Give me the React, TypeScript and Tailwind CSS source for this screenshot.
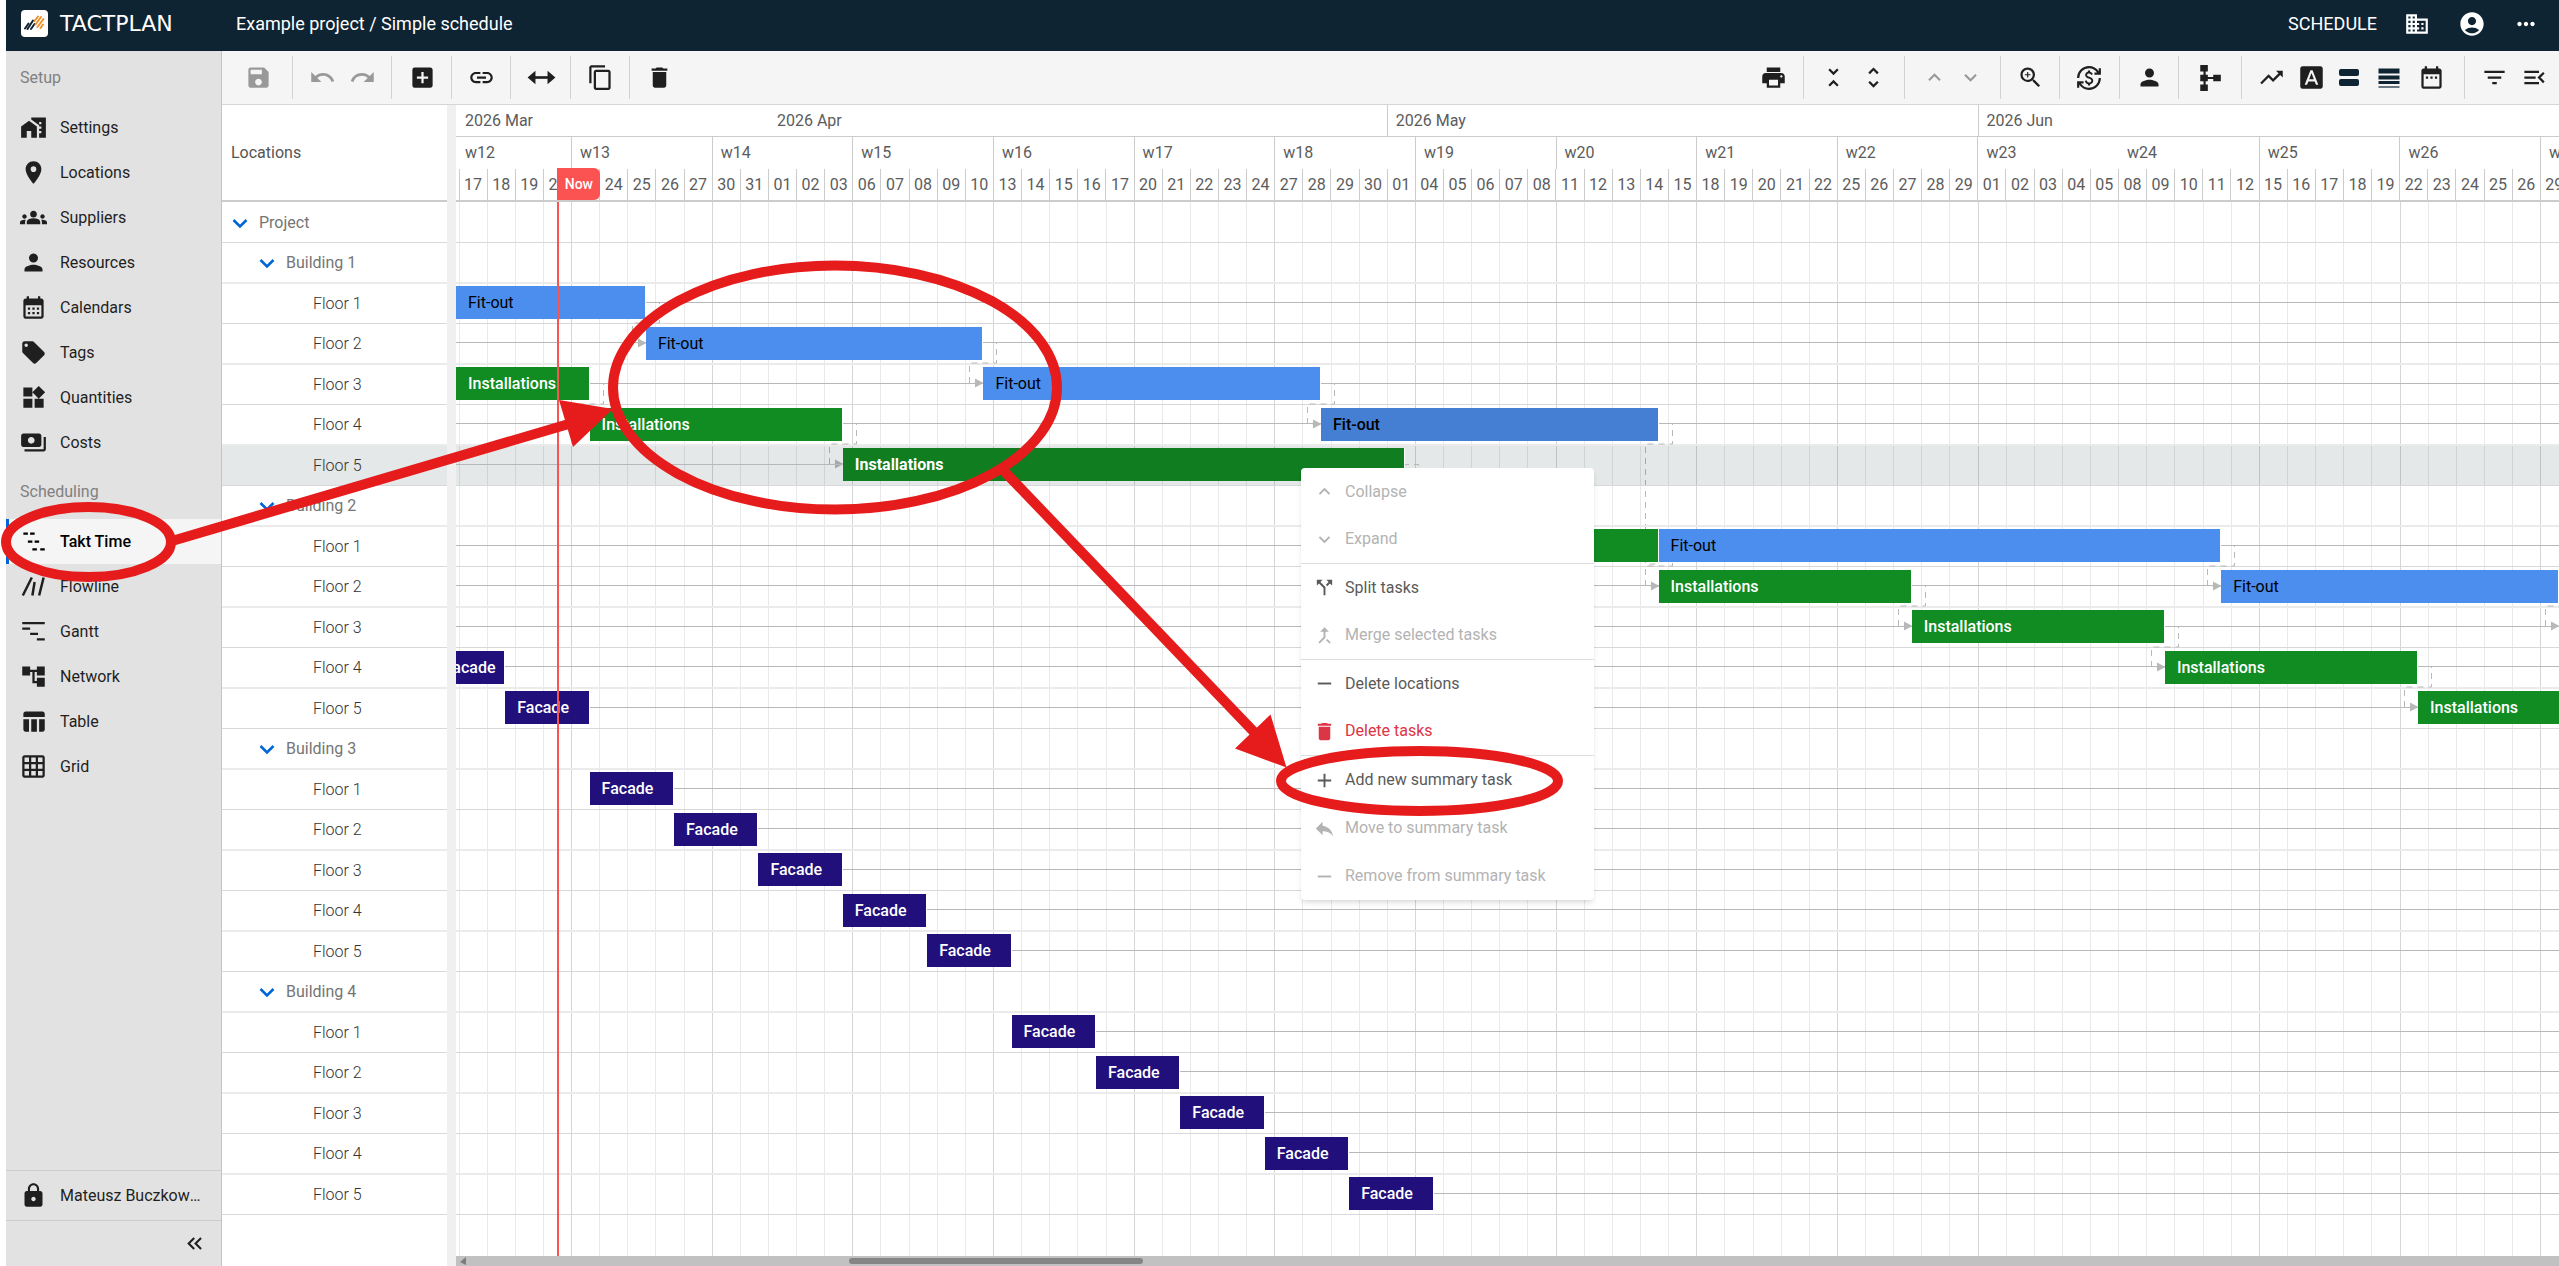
import type { ReactNode } from "react";
import {
  MdAccountCircle, MdAccountTree, MdAdd, MdAddBox, MdCalendarMonth, MdCallMerge, MdCallSplit,
  MdContentCopy, MdCurrencyExchange, MdDelete, MdDomain, MdFilterList, MdFontDownload,
  MdGridOn, MdGroups, MdHomeWork, MdKeyboardArrowDown, MdKeyboardArrowUp, MdKeyboardDoubleArrowLeft, MdLink,
  MdLocalOffer, MdLocationOn, MdLock, MdMenuOpen, MdMoreHoriz, MdPayments, MdPerson, MdPrint, MdRedo,
  MdRemove, MdReply, MdSave, MdTableChart, MdTrendingUp, MdUndo, MdUnfoldLess, MdUnfoldMore,
  MdWidgets, MdZoomIn, MdDateRange,
} from "react-icons/md";

/* ---------- time scale (in working days, day 0 = 17 March 2026) ---------- */

const VIEW_START = -0.09;
const VIEW_DAYS = 74.76;
const VIEW_END = VIEW_START + VIEW_DAYS;
const pct = (days: number) => `${(days / VIEW_DAYS) * 100}%`;
const at = (day: number) => pct(day - VIEW_START);
const NOW = 3.49;

const dayLabels: string[] = [];
for (let t = Date.UTC(2026, 2, 17); dayLabels.length < 75; t += 86400000) {
  const d = new Date(t);
  if (d.getUTCDay() % 6 !== 0) dayLabels.push(String(d.getUTCDate()).padStart(2, "0"));
}

type Segment = { label: string; from: number; line: boolean };
const months: Segment[] = [
  { label: "2026 Mar", from: VIEW_START, line: false },
  { label: "2026 Apr", from: 11, line: false },
  { label: "2026 May", from: 33, line: true },
  { label: "2026 Jun", from: 54, line: true },
];
const weeks: Segment[] = [{ label: "w12", from: VIEW_START, line: false }];
for (let w = 13; w <= 27; w++) weeks.push({ label: `w${w}`, from: 4 + (w - 13) * 5, line: w !== 24 });

/* ---------- schedule data ---------- */

type Kind = "fit" | "fitActive" | "inst" | "instActive" | "facade";
type Task = { kind: Kind; from: number; to: number; link?: boolean };
type Row = { name: string; level: number; active?: boolean; line?: [number, number]; tasks?: Task[] };

const kinds: Record<Kind, { label: string; look: string }> = {
  fit: { label: "Fit-out", look: "bg-[#4b8eed] text-black" },
  fitActive: { label: "Fit-out", look: "bg-[#447fd3] text-black font-medium" },
  inst: { label: "Installations", look: "bg-[#108c23] text-white font-medium" },
  instActive: { label: "Installations", look: "bg-[#0f7d20] text-white font-bold" },
  facade: { label: "Facade", look: "bg-[#210f7c] text-white font-medium" },
};

const facade = (n: number, from: number): Row => ({
  name: `Floor ${n}`, level: 2, line: [from, VIEW_END], tasks: [{ kind: "facade", from, to: from + 3 }],
});

const rows: Row[] = [
  { name: "Project", level: 0 },
  { name: "Building 1", level: 1 },
  { name: "Floor 1", level: 2, line: [VIEW_START, VIEW_END], tasks: [{ kind: "fit", from: VIEW_START, to: 6.66, link: true }] },
  { name: "Floor 2", level: 2, line: [VIEW_START, VIEW_END], tasks: [{ kind: "fit", from: 6.66, to: 18.66, link: true }] },
  { name: "Floor 3", level: 2, line: [VIEW_START, VIEW_END], tasks: [
    { kind: "inst", from: VIEW_START, to: 4.66, link: true },
    { kind: "fit", from: 18.66, to: 30.66, link: true },
  ] },
  { name: "Floor 4", level: 2, line: [VIEW_START, VIEW_END], tasks: [
    { kind: "inst", from: 4.66, to: 13.66, link: true },
    { kind: "fitActive", from: 30.66, to: 42.66 },
  ] },
  { name: "Floor 5", level: 2, active: true, line: [VIEW_START, 14], tasks: [{ kind: "instActive", from: 13.66, to: 33.66, link: true }] },
  { name: "Building 2", level: 1 },
  { name: "Floor 1", level: 2, line: [VIEW_START, VIEW_END], tasks: [
    { kind: "inst", from: 33.66, to: 42.66, link: true },
    { kind: "fit", from: 42.66, to: 62.66, link: true },
  ] },
  { name: "Floor 2", level: 2, line: [VIEW_START, VIEW_END], tasks: [
    { kind: "inst", from: 42.66, to: 51.66, link: true },
    { kind: "fit", from: 62.66, to: 74.66, link: true },
  ] },
  { name: "Floor 3", level: 2, line: [VIEW_START, VIEW_END], tasks: [{ kind: "inst", from: 51.66, to: 60.66, link: true }] },
  { name: "Floor 4", level: 2, line: [-0.1, VIEW_END], tasks: [
    { kind: "facade", from: -0.95, to: 1.66 },
    { kind: "inst", from: 60.66, to: 69.66, link: true },
  ] },
  { name: "Floor 5", level: 2, line: [1.66, VIEW_END], tasks: [
    { kind: "facade", from: 1.66, to: 4.66 },
    { kind: "inst", from: 69.66, to: 78.66 },
  ] },
  { name: "Building 3", level: 1 },
  facade(1, 4.66), facade(2, 7.66), facade(3, 10.66), facade(4, 13.66), facade(5, 16.66),
  { name: "Building 4", level: 1 },
  facade(1, 19.66), facade(2, 22.66), facade(3, 25.66), facade(4, 28.66), facade(5, 31.66),
];

const rowBox = (i: number) =>
  i % 2 === 0 ? "h-10 border-b border-[#d8d8d8]" : "h-[41px] border-b-2 border-[#ebebeb]";

/* ---------- custom icons ---------- */

const Svg = ({ children, size = 27 }: { children: ReactNode; size?: number }) => (
  <svg width={size} height={size} viewBox="0 0 24 24" fill="none" stroke="currentColor" strokeWidth="2" aria-hidden>
    {children}
  </svg>
);
const TaktIcon = () => <Svg><path d="M3 5h4M9 5h4M7 12h4M13 12h4M11 19h4M18 19h4" /></Svg>;
const FlowIcon = () => <Svg><path d="M2.500 20L10.500 4M11 20l2-12M17 20l4-16" strokeWidth="2.200" /></Svg>;
const GanttIcon = () => <Svg><path d="M2 4.500h20M2 9.500h7M9 14h7M15 19h7" /></Svg>;
const ChevronIcon = () => <Svg size={24}><path d="M5.500 9l6.500 6.500L18.500 9" strokeWidth="2.600" /></Svg>;
const WidthIcon = () => (
  <Svg size={29}>
    <path d="M5 12h14" strokeWidth="2.200" />
    <path d="M7 6.500L0.500 12L7 17.500zM17 6.500l6.500 5.500L17 17.500z" fill="currentColor" stroke="none" />
  </Svg>
);
const BranchIcon = () => (
  <Svg size={26}>
    <path d="M7 4v16M7 12h11" />
    <path d="M3 0h7v6H3zM3 18h7v6H3zM3 9h7v6H3zM15 9h7v6h-7z" fill="currentColor" stroke="none" />
  </Svg>
);
const StackIcon = () => (
  <svg width="22" height="20" viewBox="0 0 22 20" fill="#0f2433" aria-hidden>
    <rect x="1" y="1" width="20" height="7" rx="2" />
    <rect x="1" y="11" width="20" height="7" rx="2" />
  </svg>
);
const DensityIcon = () => (
  <svg width="22" height="20" viewBox="0 0 22 20" stroke="#0f2433" aria-hidden>
    <path d="M0.500 3h21" strokeWidth="5" />
    <path d="M0.500 9.500h21" strokeWidth="4" />
    <path d="M0.500 14.500h21" strokeWidth="3" />
    <path d="M0.500 19h21" strokeWidth="2" opacity="0.6" />
  </svg>
);

const Logo = () => (
  <svg width="27" height="27" viewBox="0 0 27 27" aria-hidden className="shrink-0">
    <rect width="27" height="27" rx="4" fill="#fff" />
    <g strokeWidth="2" strokeLinecap="round">
      <path d="M4 18.500L7.500 13.500M6.500 19L12 10.500M10 19L13.500 14" stroke="#0f2433" />
      <path d="M13.500 11L17 6.500M14.500 14.500L20 7M16.500 17L22.500 9M19.500 18L22 14.500" stroke="#f0922b" />
    </g>
  </svg>
);

/* ---------- chrome ---------- */

function TopBar() {
  return (
    <header className="flex h-[51px] shrink-0 items-center bg-[#0f2433] pb-1 pl-[15px] text-lg text-white">
      <a href="#home" className="flex w-[215px] items-center gap-3">
        <Logo />
        <span className="font-['DejaVu_Sans',sans-serif] text-[22px] leading-none">TACTPLAN</span>
      </a>
      <h1 className="flex-1">Example project / Simple schedule</h1>
      <button type="button">SCHEDULE</button>
      <button type="button" aria-label="Company" className="ml-[27px]"><MdDomain size={26} /></button>
      <button type="button" aria-label="Account" className="ml-7"><MdAccountCircle size={28} /></button>
      <button type="button" aria-label="More" className="mr-5 ml-[27px]"><MdMoreHoriz size={26} /></button>
    </header>
  );
}

function NavItem({ icon, label, active }: { icon: ReactNode; label: string; active?: boolean }) {
  return (
    <a
      href={`#${label.toLowerCase().replace(" ", "-")}`}
      className={`flex h-[45px] items-center gap-[13px] border-l-[3px] pl-[11px] ${
        active ? "border-[#0066d6] bg-[#f5f5f5] font-medium text-black" : "border-transparent"
      }`}
    >
      {icon}
      {label}
    </a>
  );
}

function Sidebar() {
  return (
    <aside className="flex w-[216px] shrink-0 flex-col border-r border-[#c4c4c4] bg-[#e2e2e2] text-base text-[#1f1f1f]">
      <nav className="flex-1">
        <h2 className="flex h-[54px] items-center pl-[14px] text-[#808080]">Setup</h2>
        <NavItem icon={<MdHomeWork size={27} />} label="Settings" />
        <NavItem icon={<MdLocationOn size={27} />} label="Locations" />
        <NavItem icon={<MdGroups size={27} />} label="Suppliers" />
        <NavItem icon={<MdPerson size={27} />} label="Resources" />
        <NavItem icon={<MdCalendarMonth size={27} />} label="Calendars" />
        <NavItem icon={<MdLocalOffer size={27} />} label="Tags" />
        <NavItem icon={<MdWidgets size={27} />} label="Quantities" />
        <NavItem icon={<MdPayments size={27} />} label="Costs" />
        <h2 className="flex h-[54px] items-center pl-[14px] text-[#808080]">Scheduling</h2>
        <NavItem icon={<TaktIcon />} label="Takt Time" active />
        <NavItem icon={<FlowIcon />} label="Flowline" />
        <NavItem icon={<GanttIcon />} label="Gantt" />
        <NavItem icon={<MdAccountTree size={27} />} label="Network" />
        <NavItem icon={<MdTableChart size={27} />} label="Table" />
        <NavItem icon={<MdGridOn size={27} />} label="Grid" />
      </nav>
      <div className="flex h-[50px] items-center gap-[13px] border-t border-[#cdcdcd] pr-4 pl-[14px]">
        <MdLock size={27} className="shrink-0" />
        <span className="truncate">Mateusz Buczkowski</span>
      </div>
      <div className="flex h-[46px] items-center justify-end border-t border-[#cdcdcd] pr-[14px]">
        <button type="button" aria-label="Collapse sidebar"><MdKeyboardDoubleArrowLeft size={25} /></button>
      </div>
    </aside>
  );
}

function Tool({ label, children, width = "w-10", off }: { label: string; children: ReactNode; width?: string; off?: boolean }) {
  return (
    <button type="button" aria-label={label} disabled={off} className={`flex h-10 items-center justify-center ${width} ${off ? "text-[#999]" : ""}`}>
      {children}
    </button>
  );
}

const Group = ({ children, pad = "px-[9px]", last }: { children: ReactNode; pad?: string; last?: boolean }) => (
  <div className={`flex h-[43px] items-center ${pad} ${last ? "" : "border-r border-[#d2d2d2]"}`}>{children}</div>
);

function Toolbar() {
  return (
    <div className="flex h-[54px] shrink-0 items-center border-b border-[#d6d6d6] bg-[#f5f5f5] text-[#1f1f1f]">
      <Group pad="pl-4 pr-[14px]"><Tool label="Save" off><MdSave size={27} /></Tool></Group>
      <Group>
        <Tool label="Undo" off><MdUndo size={27} /></Tool>
        <Tool label="Redo" off><MdRedo size={27} /></Tool>
      </Group>
      <Group pad="pl-[10px] pr-[9px]"><Tool label="Add"><MdAddBox size={27} /></Tool></Group>
      <Group><Tool label="Link"><MdLink size={27} /></Tool></Group>
      <Group pad="pl-[10px] pr-[9px]"><Tool label="Fit width"><WidthIcon /></Tool></Group>
      <Group><Tool label="Copy"><MdContentCopy size={27} /></Tool></Group>
      <Group last><Tool label="Delete"><MdDelete size={27} /></Tool></Group>
      <div className="flex-1" />
      <Group pad="pl-[9px] pr-[10px]"><Tool label="Print"><MdPrint size={27} /></Tool></Group>
      <Group pad="pl-[9px] pr-[11px]">
        <Tool label="Collapse all"><MdUnfoldLess size={27} /></Tool>
        <Tool label="Expand all"><MdUnfoldMore size={27} /></Tool>
      </Group>
      <Group pad="pl-[11px] pr-3">
        <Tool label="Move up" off width="w-9"><MdKeyboardArrowUp size={25} /></Tool>
        <Tool label="Move down" off width="w-9"><MdKeyboardArrowDown size={25} /></Tool>
      </Group>
      <Group><Tool label="Zoom"><MdZoomIn size={27} /></Tool></Group>
      <Group pad="pl-[9px] pr-[10px]"><Tool label="Costs"><MdCurrencyExchange size={26} /></Tool></Group>
      <Group><Tool label="Resources"><MdPerson size={27} /></Tool></Group>
      <Group><Tool label="Structure" width="w-11"><BranchIcon /></Tool></Group>
      <Group pad="pl-[9px] pr-[13px]">
        <Tool label="Trend"><MdTrendingUp size={27} /></Tool>
        <Tool label="Labels"><MdFontDownload size={27} /></Tool>
        <Tool label="Stack" width="w-9"><StackIcon /></Tool>
        <Tool label="Density" width="w-11"><DensityIcon /></Tool>
        <Tool label="Dates"><MdDateRange size={27} /></Tool>
      </Group>
      <Group last pad="pl-[9px] pr-[5px]">
        <Tool label="Filter"><MdFilterList size={27} /></Tool>
        <Tool label="Open menu"><MdMenuOpen size={27} /></Tool>
      </Group>
    </div>
  );
}

/* ---------- location tree ---------- */

const indent = ["pl-[6px]", "pl-[33px]", "pl-[91px]"];

function LocationTree() {
  return (
    <section className="flex w-[225px] shrink-0 flex-col">
      <div className="flex h-[97px] items-center border-b-2 border-[#ccc] pl-[9px] text-[#555]">Locations</div>
      <ul className="pt-px">
        {rows.map((r, i) => (
          <li
            key={i}
            className={`flex items-center gap-[7px] ${rowBox(i)} ${indent[r.level]} ${r.active ? "bg-[#e4e8e8]" : ""} ${
              r.level === 2 ? "font-light text-[#333]" : "text-[#757575]"
            }`}
          >
            {r.level < 2 && (
              <button type="button" aria-label={`Collapse ${r.name}`} className="text-[#0066d6]">
                <ChevronIcon />
              </button>
            )}
            {r.name}
          </li>
        ))}
      </ul>
    </section>
  );
}

/* ---------- timeline ---------- */

function Segments({ items, border }: { items: Segment[]; border: string }) {
  return (
    <div className={`flex h-8 ${border}`}>
      {items.map((s, i) => (
        <div
          key={s.label}
          className={`flex shrink-0 items-center overflow-hidden border-l pl-2 whitespace-nowrap ${
            s.line ? "border-[#ccc]" : "border-transparent"
          }`}
          style={{ width: pct((items[i + 1]?.from ?? VIEW_END) - s.from) }}
        >
          {s.label}
        </div>
      ))}
    </div>
  );
}

function TimeHeader() {
  return (
    <div className="relative h-[97px] overflow-hidden border-b-2 border-[#ccc] text-[#5c5c5c]">
      <Segments items={months} border="border-b border-[#ccc]" />
      <Segments items={weeks} border="" />
      <div className="flex h-[31px]">
        <div className="shrink-0" style={{ width: pct(-VIEW_START) }} />
        {dayLabels.map((d, i) => (
          <div key={i} className="flex shrink-0 items-center justify-center border-l border-[#ccc]" style={{ width: pct(1) }}>
            {d}
          </div>
        ))}
      </div>
      <div
        className="absolute bottom-0 flex h-8 w-[43px] items-center rounded-r-md bg-[#fb5252] pl-2 text-sm font-medium text-white"
        style={{ left: at(NOW) }}
      >
        Now
      </div>
    </div>
  );
}

/* Dashed dependency from the end of a task to the start of the task one row below. */
function Dependency({ day }: { day: number }) {
  return (
    <svg className="absolute top-[18px] -ml-[15px] overflow-visible" style={{ left: at(day) }} width="30" height="44" aria-hidden>
      <path d="M13 0.500H28.500V21H1.500V41H8" fill="none" stroke="#b8b8b8" strokeDasharray="6 5" />
      <path d="M7 36.500L15.500 41L7 45.500z" fill="#b8b8b8" />
    </svg>
  );
}

function Bar({ task, tall }: { task: Task; tall: boolean }) {
  const kind = kinds[task.kind];
  return (
    <div
      className={`absolute z-10 flex h-[33px] items-center overflow-hidden border-r border-white bg-clip-padding pl-3 whitespace-nowrap ${
        tall ? "top-[3px]" : "top-[2px]"
      } ${kind.look}`}
      style={{ left: at(task.from), width: pct(task.to - task.from) }}
    >
      {kind.label}
    </div>
  );
}

function TimeBody() {
  return (
    <div className="relative flex-1 overflow-hidden">
      <div className="absolute inset-0">
        {dayLabels.map((_, i) => (
          <div
            key={i}
            className={`absolute inset-y-0 border-l ${i % 5 === 4 && i !== 59 ? "border-[#d6d6d6]" : "border-[#e9e9e9]"}`}
            style={{ left: at(i) }}
          />
        ))}
      </div>
      <ul className="relative pt-px">
        {rows.map((r, i) => (
          <li key={i} className={`relative ${rowBox(i)} ${r.active ? "bg-[#0f2a2a]/11" : ""}`}>
            {r.line && (
              <div
                className="absolute top-[18px] border-t border-[#b8b8b8]"
                style={{ left: at(r.line[0]), width: pct(r.line[1] - r.line[0]) }}
              />
            )}
            {r.tasks?.map((t) => t.link && <Dependency key={t.to} day={t.to} />)}
            {i === 5 && (
              <svg className="absolute top-[18px] -ml-[15px] overflow-visible" style={{ left: at(42.66) }} width="30" height="125" aria-hidden>
                <path d="M13 0.500H28.500V21H1.500V141H12" fill="none" stroke="#b8b8b8" strokeDasharray="6 5" />
              </svg>
            )}
            {r.tasks?.map((t) => <Bar key={t.from} task={t} tall={i % 2 === 1} />)}
          </li>
        ))}
      </ul>
      <div className="absolute inset-y-0 z-20 border-l-2 border-[#fb5252]" style={{ left: at(NOW) }} />
    </div>
  );
}

function HScroll() {
  return (
    <div className="flex h-[10px] shrink-0 items-center bg-[#c1c1c1]">
      <svg width="14" height="10" aria-hidden><path d="M10 1v8L4 6z" fill="#7d7d7d" /></svg>
      <div className="w-[18%]" />
      <div className="h-[6px] w-[14%] rounded-full bg-[#858585]" />
    </div>
  );
}

/* ---------- context menu ---------- */

function MenuItem({ icon, label, look = "text-[#5a5a5a]", off }: { icon: ReactNode; label: string; look?: string; off?: boolean }) {
  return (
    <button type="button" role="menuitem" disabled={off} className={`flex w-full flex-1 items-center gap-[9px] pl-3 ${off ? "text-[#b3b3b3]" : look}`}>
      {icon}
      {label}
    </button>
  );
}

const MenuSection = ({ height = "h-24", children }: { height?: string; children: ReactNode }) => (
  <div className={`flex flex-col ${height}`}>{children}</div>
);

function ContextMenu() {
  return (
    <div role="menu" className="absolute top-[468px] left-[1301px] z-30 w-[293px] divide-y divide-[#dedede] rounded-sm bg-white shadow-md">
      <MenuSection>
        <MenuItem off icon={<MdKeyboardArrowUp size={23} />} label="Collapse" />
        <MenuItem off icon={<MdKeyboardArrowDown size={23} />} label="Expand" />
      </MenuSection>
      <MenuSection>
        <MenuItem icon={<MdCallSplit size={23} />} label="Split tasks" />
        <MenuItem off icon={<MdCallMerge size={23} />} label="Merge selected tasks" />
      </MenuSection>
      <MenuSection>
        <MenuItem icon={<MdRemove size={23} />} label="Delete locations" />
        <MenuItem look="text-[#dc3545]" icon={<MdDelete size={23} />} label="Delete tasks" />
      </MenuSection>
      <MenuSection height="h-36">
        <MenuItem icon={<MdAdd size={23} />} label="Add new summary task" />
        <MenuItem off icon={<MdReply size={23} />} label="Move to summary task" />
        <MenuItem off icon={<MdRemove size={23} />} label="Remove from summary task" />
      </MenuSection>
    </div>
  );
}

/* ---------- tutorial marks drawn over the page ---------- */

function Marks() {
  return (
    <svg className="pointer-events-none absolute inset-0 z-40 h-full w-full" fill="none" stroke="#e61c1c" strokeWidth="10" aria-hidden>
      <ellipse cx="88.500" cy="542" rx="82.500" ry="35" />
      <ellipse cx="835" cy="387.500" rx="222" ry="122" />
      <ellipse cx="1419.500" cy="781" rx="138.500" ry="30" />
      <path d="M172 541L572 423M1003 470L1255 733" />
      <path d="M559 400L613 409L573 447zM1270.500 714.500L1286.500 767.500L1235 748.500z" fill="#e61c1c" stroke="none" />
    </svg>
  );
}

export default function App() {
  return (
    <div className="relative flex h-screen flex-col overflow-hidden bg-white pl-[6px] font-[Roboto,sans-serif] text-base">
      <TopBar />
      <div className="flex min-h-0 flex-1">
        <Sidebar />
        <main className="flex min-w-0 flex-1 flex-col">
          <Toolbar />
          <div className="flex min-h-0 flex-1">
            <LocationTree />
            <div className="w-[9px] shrink-0 bg-[#f0f0f0]" />
            <section className="flex min-w-0 flex-1 flex-col">
              <TimeHeader />
              <TimeBody />
              <HScroll />
            </section>
          </div>
        </main>
      </div>
      <ContextMenu />
      <Marks />
    </div>
  );
}
